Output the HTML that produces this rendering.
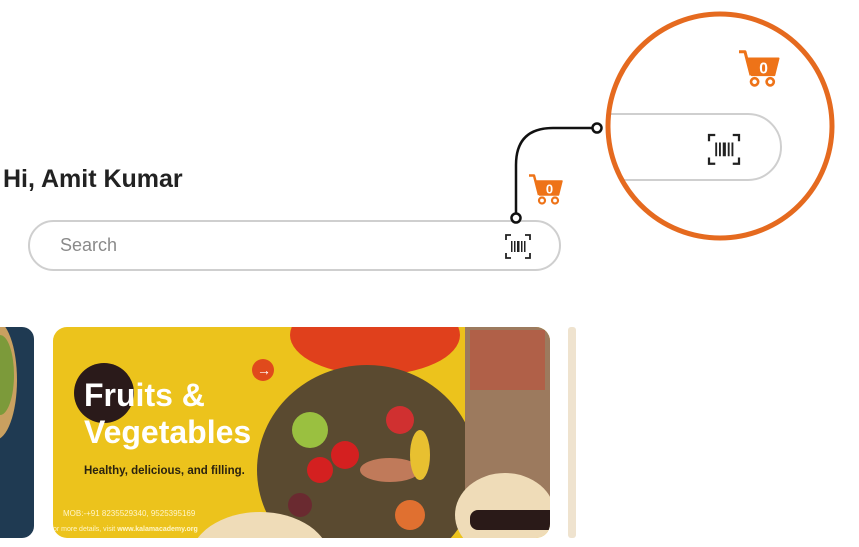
<!DOCTYPE html>
<html><head><style>
html,body{margin:0;padding:0;background:#fff;width:859px;height:547px;overflow:hidden;position:relative;font-family:"Liberation Sans",sans-serif}
.abs{position:absolute}
svg{display:block}
</style></head><body>
<div class="abs" style="left:3px;top:165px;font-size:25px;font-weight:bold;color:#222">Hi, Amit Kumar</div>
<div class="abs" style="left:28px;top:220px;width:529px;height:47px;border:2px solid #cfcfcf;border-radius:26px"></div>
<div class="abs" style="left:60px;top:235px;font-size:18px;color:#8a8a8a">Search</div>

<svg class="abs" style="left:0;top:0" width="859" height="547">
  <defs>
    <clipPath id="cc"><circle cx="720" cy="126" r="112"/></clipPath>
    <g id="bc">
      <path d="M0 5V0H5M19 0H24V5M24 18V23H19M5 23H0V18" fill="none" stroke="#222" stroke-width="1.8"/>
      <rect x="5" y="6" width="1.5" height="11" fill="#222"/><rect x="8" y="6" width="1.5" height="11" fill="#222"/>
      <rect x="11" y="6" width="2.5" height="11" fill="#222"/><rect x="15" y="6" width="1.5" height="11" fill="#222"/><rect x="18" y="6" width="1.5" height="11" fill="#222"/>
    </g>
    <g id="cart">
      <path d="M0 1.5H5L10 21" fill="none" stroke="#ee7318" stroke-width="2.5" stroke-linejoin="round"/>
      <path d="M7 7H33L29.5 21H10.5Z" fill="#ee7318" stroke="#ee7318" stroke-width="1.5" stroke-linejoin="round"/>
      <circle cx="13" cy="26.5" r="3" fill="#fff" stroke="#ee7318" stroke-width="2.2"/>
      <circle cx="26" cy="26.5" r="3" fill="#fff" stroke="#ee7318" stroke-width="2.2"/>
      <text x="20.5" y="19.5" font-family="Liberation Sans" font-weight="bold" font-size="13" fill="#fff" text-anchor="middle">0</text>
    </g>
  </defs>
  <use href="#bc" transform="translate(506,235)"/>
  <use href="#cart" transform="translate(529,174)"/>
  <path d="M516 214V165Q516 128 553 128H592" fill="none" stroke="#111" stroke-width="2.5"/>
  <circle cx="516" cy="218" r="4.5" fill="#fff" stroke="#111" stroke-width="2.5"/>
  <circle cx="597" cy="128" r="4.5" fill="#fff" stroke="#111" stroke-width="2.5"/>
  <g clip-path="url(#cc)">
    <rect x="560" y="114" width="221" height="66" rx="33" fill="#fff" stroke="#cfcfcf" stroke-width="2"/>
    <use href="#bc" transform="translate(709,135) scale(1.25)"/>
    <use href="#cart" transform="translate(739,50) scale(1.2)"/>
  </g>
  <circle cx="720" cy="126" r="112" fill="none" stroke="#e56a1f" stroke-width="5"/>

  <defs><clipPath id="bn"><rect x="53" y="327" width="497" height="211" rx="14"/></clipPath>
  <clipPath id="lb"><rect x="-20" y="327" width="54" height="211" rx="12"/></clipPath></defs>
  <g clip-path="url(#lb)">
    <rect x="-20" y="327" width="54" height="211" fill="#1f3a52"/>
    <ellipse cx="-5" cy="380" rx="22" ry="60" fill="#c9a060"/>
    <ellipse cx="0" cy="375" rx="14" ry="40" fill="#7c9a3a"/>
  </g>
  <rect x="568" y="327" width="8" height="211" rx="3" fill="#efe3cf"/>
  <g clip-path="url(#bn)">
    <rect x="53" y="327" width="497" height="211" fill="#ecc31c"/>
    <ellipse cx="375" cy="335" rx="85" ry="40" fill="#e0401c"/>
    <ellipse cx="367" cy="470" rx="110" ry="105" fill="#5a4a30"/>
    <circle cx="310" cy="430" r="18" fill="#9ac040"/><circle cx="345" cy="455" r="14" fill="#d42020"/>
    <circle cx="320" cy="470" r="13" fill="#d42020"/><circle cx="400" cy="420" r="14" fill="#d03030"/>
    <ellipse cx="390" cy="470" rx="30" ry="12" fill="#c07a5a"/><ellipse cx="420" cy="455" rx="10" ry="25" fill="#e8c030"/>
    <circle cx="300" cy="505" r="12" fill="#6a2a30"/><circle cx="410" cy="515" r="15" fill="#e07030"/>
    <rect x="465" y="327" width="85" height="170" fill="#9c7a5e"/>
    <rect x="470" y="330" width="75" height="60" fill="#b06048"/>
    <ellipse cx="505" cy="515" rx="50" ry="42" fill="#efdcb8"/>
    <ellipse cx="260" cy="560" rx="70" ry="48" fill="#efdcb8"/>
    <rect x="470" y="510" width="90" height="20" rx="8" fill="#2a1a18"/>
    <circle cx="104" cy="393" r="30" fill="#2a1a1a"/>
    <circle cx="263" cy="370" r="11" fill="#e04a1c"/>
    <text x="257" y="375" font-size="14" fill="#fff" font-weight="bold">→</text>
    <text x="84" y="406" font-family="Liberation Sans" font-weight="bold" font-size="32" fill="#fff">Fruits &amp;</text>
    <text x="84" y="443" font-family="Liberation Sans" font-weight="bold" font-size="32" fill="#fff">Vegetables</text>
    <text x="84" y="474" font-family="Liberation Sans" font-weight="bold" font-size="11.5" fill="#2a2210">Healthy, delicious, and filling.</text>
    <text x="63" y="516" font-size="8" fill="#fff5c8">MOB:-+91 8235529340, 9525395169</text>
    <text x="53" y="531" font-size="7" fill="#fff5c8">or more details, visit <tspan font-weight="bold">www.kalamacademy.org</tspan></text>
  </g>
</svg>
</body></html>
